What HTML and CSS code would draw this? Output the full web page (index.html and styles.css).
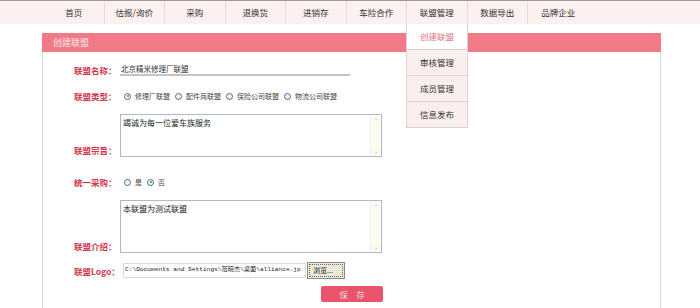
FILE: index.html
```html
<!DOCTYPE html>
<html lang="zh-CN">
<head>
    <meta charset="UTF-8">
    <title>创建联盟</title>
    <link rel="stylesheet" href="styles.css">
</head>
<body>
    <div class="topnav">
        <ul class="menu">
            <li>首页</li>
            <li>估报/询价</li>
            <li>采购</li>
            <li>退换货</li>
            <li>进销存</li>
            <li>车险合作</li>
            <li class="has-sub">联盟管理
                <ul class="submenu">
                    <li class="current">创建联盟</li>
                    <li>审核管理</li>
                    <li>成员管理</li>
                    <li>信息发布</li>
                </ul>
            </li>
            <li>数据导出</li>
            <li class="last">品牌企业</li>
        </ul>
    </div>

    <div class="panel">
        <div class="panel-title">创建联盟</div>
        <div class="panel-body">
            <div class="row row-name">
                <label>联盟名称：</label>
                <div class="line-input">北京精米修理厂联盟</div>
            </div>

            <div class="row row-type">
                <label>联盟类型：</label>
                <div class="radios">
                    <span class="radio checked"></span><span class="rtext">修理厂联盟</span>
                    <span class="radio"></span><span class="rtext">配件商联盟</span>
                    <span class="radio"></span><span class="rtext">保险公司联盟</span>
                    <span class="radio"></span><span class="rtext">物流公司联盟</span>
                </div>
            </div>

            <div class="row row-area row-aim">
                <label>联盟宗旨：</label>
                <div class="textbox">
                    <div class="textbox-text">竭诚为每一位爱车族服务</div>
                    <div class="scroll"><span>⌃</span><span>⌄</span></div>
                </div>
            </div>

            <div class="row row-buy">
                <label>统一采购：</label>
                <div class="radios">
                    <span class="radio"></span><span class="rtext">是</span>
                    <span class="radio checked"></span><span class="rtext">否</span>
                </div>
            </div>

            <div class="row row-area row-intro">
                <label>联盟介绍：</label>
                <div class="textbox">
                    <div class="textbox-text">本联盟为测试联盟</div>
                    <div class="scroll"><span>⌃</span><span>⌄</span></div>
                </div>
            </div>

            <div class="row row-logo">
                <label>联盟Logo：</label>
                <div class="file-box">C:\Documents and Settings\范晓杰\桌面\alliance.jp</div>
                <div class="browse">浏览...</div>
            </div>

            <div class="row row-save">
                <div class="save-btn">保　存</div>
            </div>
        </div>
    </div>
</body>
</html>
```

FILE: styles.css
```css
body {
    margin: 0;
    background: #fff;
    font-family: "Noto Sans CJK SC", "DejaVu Sans", sans-serif;
    color: #333;
}

/* 顶部导航 */
.topnav {
    height: 24px;
    background: #fcf0f0;
    border-top: 1px solid #9a9a9a;
    box-sizing: border-box;
}

.menu {
    list-style: none;
    margin: 0;
    padding: 0 0 0 44px;
    display: flex;
    height: 100%;
}

.menu > li {
    position: relative;
    width: 60.5px;
    font-size: 8.5px;
    line-height: 23px;
    text-align: center;
    border-right: 1px solid #ead9d9;
    box-sizing: border-box;
}

.menu > li.last {
    border-right: none;
}

.submenu {
    position: absolute;
    top: 23px;
    left: -1px;
    width: 62px;
    margin: 0;
    padding: 0;
    list-style: none;
    border: 1px solid #dcd2d2;
    border-top: none;
    box-sizing: border-box;
    z-index: 5;
}

.submenu li {
    height: 25px;
    line-height: 24px;
    font-size: 8.5px;
    background: #fbeeee;
    border-top: 1px solid #dcd2d2;
    color: #333;
}

.submenu li.current {
    background: #fff;
    color: #e07585;
    border-top: none;
    height: 25px;
}

/* 面板 */
.panel {
    margin: 9px 0 0 42px;
    width: 619px;
    border: 1px solid #dedede;
    border-top: none;
    box-sizing: border-box;
}

.panel-title {
    height: 19px;
    line-height: 19px;
    background: #f07a86;
    color: #fde8ea;
    font-size: 9px;
    padding-left: 11px;
    margin: 0 -1px;
}

.panel-body {
    height: 250px;
    padding-left: 31px;
    box-sizing: border-box;
}

.row {
    display: flex;
    align-items: center;
}

.row label {
    width: 46px;
    flex: none;
    color: #d5364f;
    font-weight: bold;
    font-size: 8.5px;
    white-space: nowrap;
}

.row-name { margin-top: 12px; height: 12px; }
.row-type { margin-top: 14px; height: 12px; }
.row-aim { margin-top: 12px; height: 43px; }
.row-buy { margin-top: 19px; height: 12px; }
.row-intro { margin-top: 12px; height: 53px; }
.row-logo { margin-top: 9px; height: 17px; }
.row-save { margin-top: 7px; height: 16px; padding-left: 247px; }

.row-area {
    align-items: flex-end;
}

.row-area label {
    padding-bottom: 1px;
}

.line-input {
    width: 230px;
    height: 12px;
    font-size: 7.5px;
    line-height: 9px;
    padding-left: 1px;
    border-bottom: 2px solid #c4c4c4;
    box-sizing: border-box;
}

.radios {
    display: flex;
    align-items: center;
    font-size: 7px;
    color: #444;
}

.radio {
    width: 7px;
    height: 7px;
    border: 1px solid #3f6d9a;
    border-radius: 50%;
    box-sizing: border-box;
    margin: 0 4px 0 4px;
    background: #f4f7fa;
    position: relative;
}

.radio.checked::after {
    content: "";
    position: absolute;
    left: 1.5px;
    top: 1.5px;
    width: 2px;
    height: 2px;
    border-radius: 50%;
    background: #3b9c3b;
}

.rtext {
    margin-right: 1px;
}

.textbox {
    width: 262px;
    height: 100%;
    border: 1px solid #a9bccc;
    box-sizing: border-box;
    display: flex;
}

.textbox-text {
    flex: 1;
    font-size: 8px;
    padding: 2px 0 0 2px;
    color: #222;
}

.scroll {
    width: 10px;
    background: #fbfbf2;
    border-left: 1px solid #f0f0e6;
    display: flex;
    flex-direction: column;
    justify-content: space-between;
    align-items: center;
    font-size: 6px;
    color: #b8b8b0;
    line-height: 9px;
    padding: 1px 0;
}

.file-box {
    margin-left: 3px;
    width: 183px;
    height: 15px;
    border: 1px solid #d8d8d8;
    box-sizing: border-box;
    font-family: "Liberation Mono", "Noto Sans CJK SC", monospace;
    font-size: 6.2px;
    line-height: 11px;
    padding-left: 1px;
    white-space: nowrap;
    color: #222;
}

.browse {
    margin-left: 1px;
    width: 38px;
    height: 17px;
    background: #ece9d8;
    border: 1px solid #8a8a80;
    outline: 1px dotted #666;
    outline-offset: -3px;
    box-sizing: border-box;
    font-size: 7px;
    line-height: 15px;
    padding-left: 5px;
    color: #222;
}

.save-btn {
    width: 62px;
    height: 16px;
    line-height: 16px;
    background: #e8556b;
    border-radius: 2px;
    color: #fbd8dc;
    text-align: center;
    font-size: 8.5px;
}
```
